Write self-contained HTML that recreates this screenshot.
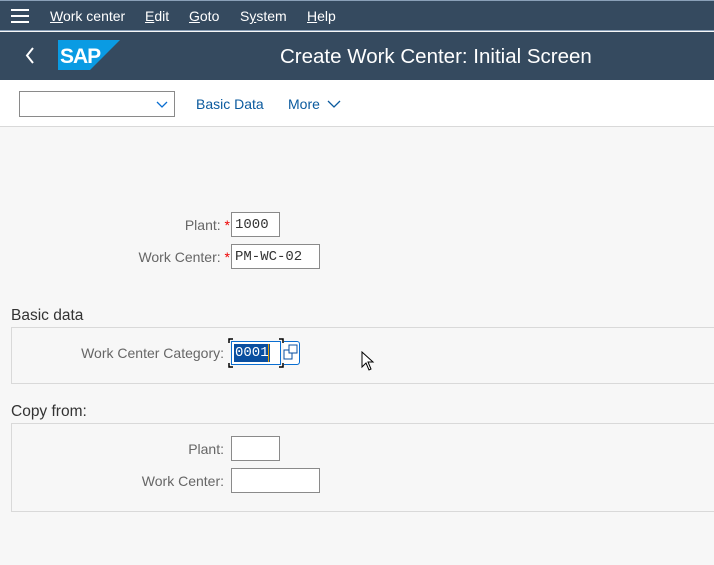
<!DOCTYPE html>
<html><head><meta charset="utf-8"><style>
*{box-sizing:border-box;margin:0;padding:0}
body{width:714px;height:565px;overflow:hidden;background:#f7f7f7;font-family:"Liberation Sans",sans-serif;position:relative}
.a{position:absolute}
.menu{left:0;top:0;width:714px;height:31px;background:#354a5f;border-top:1px solid #8aa0b8;border-bottom:1px solid #8aa0b8}
.menu span{position:absolute;top:7px;color:#fff;font-size:14px}
.shell{left:0;top:32px;width:714px;height:48px;background:#354a5f}
.tb{left:0;top:80px;width:714px;height:47px;background:#fff;border-bottom:1px solid #d9d9d9}
.lbl{font-size:14px;color:#666;text-align:right}
.req{color:#e00}
.inp{background:#fff;border:1px solid #8a8a8a;height:25px;font-family:"Liberation Mono",monospace;font-size:14px;color:#333;padding:4px 3px}
.box{border:1px solid #d9d9d9;left:11px;width:710px}
.h{font-size:15.5px;color:#333}
</style></head><body>
<div class="a menu">
 <svg class="a" style="left:11px;top:8px" width="18" height="14"><rect y="0" width="18" height="2" fill="#fff"/><rect y="6" width="18" height="2" fill="#fff"/><rect y="12" width="18" height="2" fill="#fff"/></svg>
 <span style="left:50px"><u>W</u>ork center</span>
 <span style="left:145px"><u>E</u>dit</span>
 <span style="left:189px"><u>G</u>oto</span>
 <span style="left:240px">S<u>y</u>stem</span>
 <span style="left:307px"><u>H</u>elp</span>
</div>
<div class="a shell">
 <svg class="a" style="left:24px;top:14px" width="12" height="20"><path d="M9 2 L3 9.5 L9 17" stroke="#fff" stroke-width="2" fill="none"/></svg>
 <svg class="a" style="left:58px;top:8px" width="62" height="30"><polygon points="0,0 62,0 32,30 0,30" fill="#0a9be3"/><text x="2" y="23" font-family="Liberation Sans" font-weight="bold" font-size="21" fill="#fff" letter-spacing="-1">SAP</text></svg>
 <div class="a" style="left:280px;top:13px;color:#fff;font-size:20.5px">Create Work Center: Initial Screen</div>
</div>
<div class="a tb">
 <div class="a" style="left:19px;top:11px;width:156px;height:26px;border:1px solid #8a8a8a"></div>
 <svg class="a" style="left:156px;top:21px" width="12" height="8"><path d="M1 1 L6 6 L11 1" stroke="#0a6ed1" stroke-width="1.3" fill="none"/></svg>
 <div class="a" style="left:196px;top:16px;color:#0a5a9e;font-size:14px">Basic Data</div>
 <div class="a" style="left:288px;top:16px;color:#0a5a9e;font-size:14px">More</div>
 <svg class="a" style="left:327px;top:20px" width="14" height="9"><path d="M1 1 L7 7 L13 1" stroke="#0a5a9e" stroke-width="1.3" fill="none"/></svg>
</div>
<div class="a lbl" style="left:60px;top:217px;width:170px">Plant: <span class="req">*</span></div>
<div class="a inp" style="left:231px;top:212px;width:49px">1000</div>
<div class="a lbl" style="left:60px;top:249px;width:170px">Work Center: <span class="req">*</span></div>
<div class="a inp" style="left:231px;top:244px;width:89px">PM-WC-02</div>
<div class="a h" style="left:11px;top:307px">Basic data</div>
<div class="a box" style="top:327px;height:57px"></div>
<div class="a lbl" style="left:30px;top:345px;width:194px">Work Center Category:</div>
<svg class="a" style="left:228px;top:338px" width="56" height="30"><path d="M1 5 V1 H5 M51 1 H55 V5 M55 25 V29 H51 M5 29 H1 V25" stroke="#000" stroke-width="1.5" fill="none"/></svg>
<div class="a" style="left:231px;top:341px;width:50px;height:24px;border:1px solid #0a6ed1;background:#fff"></div>
<div class="a" style="left:234px;top:344px;height:18px;background:#0a4fa0;color:#fff;font-family:'Liberation Mono',monospace;font-size:14px;padding:0 1px;line-height:18px">0001</div>
<div class="a" style="left:268px;top:344px;width:1px;height:18px;background:#e8a000"></div>
<svg class="a" style="left:281px;top:341px" width="20" height="25"><path d="M3 0.5 H16 A2.5 2.5 0 0 1 18.5 3 V21 A2.5 2.5 0 0 1 16 23.5 H3" fill="#fff" stroke="#0a6ed1"/><rect x="3" y="9" width="8" height="9" fill="none" stroke="#0a4fa0"/><rect x="8" y="4" width="8" height="8" fill="#fff" stroke="#0a4fa0"/></svg>
<svg class="a" style="left:361px;top:351px" width="14" height="20"><path d="M1 1 L1 16 L5 12 L8 19 L10 18 L7 11 L12 11 Z" fill="#fff" stroke="#000"/></svg>
<div class="a h" style="left:11px;top:403px">Copy from:</div>
<div class="a box" style="top:423px;height:89px"></div>
<div class="a lbl" style="left:60px;top:441px;width:164px">Plant:</div>
<div class="a inp" style="left:231px;top:436px;width:49px"></div>
<div class="a lbl" style="left:60px;top:473px;width:164px">Work Center:</div>
<div class="a inp" style="left:231px;top:468px;width:89px"></div>
</body></html>
